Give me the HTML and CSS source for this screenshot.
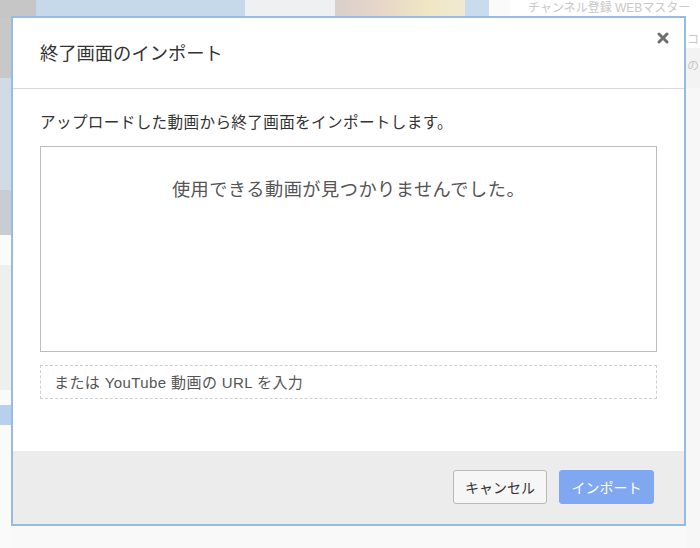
FILE: index.html
```html
<!DOCTYPE html>
<html lang="ja">
<head>
<meta charset="utf-8">
<title>終了画面のインポート</title>
<link rel="stylesheet" href="styles.css">
</head>
<body>
<div class="page">
  <div class="bg">
    <div class="bg-top">
      <div class="t t1"></div>
      <div class="t t2"></div>
      <div class="t t3"></div>
      <div class="t t4"></div>
      <div class="t t5"></div>
      <div class="t t6"></div>
      <div class="t t7"><span class="bg-text">チャンネル登録 WEBマスター</span></div>
    </div>
    <div class="bg-main">
      <div class="bg-left">
        <div class="s s1"></div>
        <div class="s s2"></div>
        <div class="s s3"></div>
        <div class="s s4"></div>
        <div class="s s5"></div>
        <div class="s s6"></div>
        <div class="s s7"></div>
        <div class="s s8"></div>
      </div>
      <div class="bg-center"></div>
      <div class="bg-right">
        <div class="r r1"><span class="bg-text">コ</span></div>
        <div class="r r2"><span class="bg-text">の</span></div>
        <div class="r r3"></div>
      </div>
    </div>
  </div>

  <div class="modal">
    <div class="modal-header">
      <h1 class="modal-title">終了画面のインポート</h1>
      <button class="close" aria-label="閉じる">
        <svg width="12" height="12" viewBox="0 0 12 12"><path d="M2 2 L10 10 M10 2 L2 10" stroke="#6e6e6e" stroke-width="3" stroke-linecap="round"/></svg>
      </button>
    </div>
    <div class="modal-body">
      <p class="intro">アップロードした動画から終了画面をインポートします。</p>
      <div class="video-list">
        <p class="empty">使用できる動画が見つかりませんでした。</p>
      </div>
      <input class="url-input" type="text" placeholder="または YouTube 動画の URL を入力">
    </div>
    <div class="modal-footer">
      <button class="btn btn-cancel">キャンセル</button>
      <button class="btn btn-primary">インポート</button>
    </div>
  </div>
</div>
</body>
</html>
```

FILE: styles.css
```css
* { box-sizing: border-box; }
html, body { margin: 0; padding: 0; }
body {
  font-family: "Liberation Sans", "Noto Sans CJK JP", sans-serif;
  background: #f9f9f9;
  width: 700px;
  height: 548px;
  overflow: hidden;
}
.page { position: relative; width: 700px; height: 548px; }

/* blurred background page */
.bg { display: flex; flex-direction: column; width: 700px; height: 548px; }
.bg-top { display: flex; height: 18px; flex: none; }
.t { height: 100%; }
.t1 { width: 36px; background: #c6c6c6; }
.t2 { width: 209px; background: #c5d9ea; }
.t3 { width: 90px; background: #eef0f2; }
.t4 { width: 130px; background: linear-gradient(90deg, #d9cfcb 0%, #e8d8c8 40%, #efe6c4 70%, #f0ead2 100%); }
.t5 { width: 24px; background: #c9dcee; }
.t6 { width: 21px; background: #fafafa; }
.t7 { flex: 1; background: #ffffff; padding-left: 18px; }
.bg-text { font-size: 12px; color: #c8c8c8; line-height: 12px; white-space: nowrap; }
.t7 .bg-text { position: relative; top: -2px; }
.bg-main { display: flex; flex: 1; }
.bg-left { width: 12px; display: flex; flex-direction: column; }
.s1 { height: 60px; background: #c8c8c8; }
.s2 { height: 112px; background: #d1dbe6; }
.s3 { height: 45px; background: #c7cdd3; }
.s4 { height: 30px; background: #fbfbfb; }
.s5 { height: 125px; background: #efefef; }
.s6 { height: 15px; background: #fafafa; }
.s7 { height: 20px; background: #b7d0ee; }
.s8 { flex: 1; background: #fafafa; }
.bg-center { flex: 1; }
.bg-right { width: 14px; display: flex; flex-direction: column; }
.r1 { height: 30px; background: #ffffff; padding-top: 16px; overflow: hidden; }
.r2 { height: 40px; background: #f3f3f3; padding-top: 12px; overflow: hidden; }
.r3 { flex: 1; background: #f7f7f7; }
.bg-right .bg-text { display: block; margin-left: 1px; }

/* modal dialog */
.modal {
  position: absolute;
  left: 11px;
  top: 16px;
  width: 675px;
  height: 510px;
  border: 2px solid #98bbe2;
  background: #ffffff;
  display: flex;
  flex-direction: column;
}
.modal-header {
  height: 71px;
  flex: none;
  border-bottom: 1px solid #dadada;
  display: flex;
  align-items: center;
  justify-content: space-between;
  padding: 0 15px 0 27px;
}
.modal-title {
  margin: 0;
  font-size: 18.3px;
  font-weight: 400;
  color: #333333;
  line-height: 24px;
  margin-top: 1px;
}
.close {
  align-self: flex-start;
  margin-top: 14px;
  width: 12px;
  height: 12px;
  padding: 0;
  border: 0;
  background: none;
  display: flex;
}
.modal-body {
  flex: 1;
  padding: 23px 27px 0 27px;
  display: flex;
  flex-direction: column;
}
.intro {
  margin: 0 0 12px 0;
  font-size: 15.6px;
  line-height: 22px;
  color: #333333;
  letter-spacing: 0.35px;
}
.video-list {
  height: 206px;
  border: 1px solid #bdbdbd;
  padding-top: 31px;
  text-align: center;
}
.empty {
  margin: 0;
  font-size: 18.2px;
  line-height: 24px;
  color: #555555;
  letter-spacing: 0.5px;
}
.url-input {
  margin-top: 13px;
  height: 34px;
  width: 100%;
  border: 1px dashed #cfcfcf;
  padding: 0 13px;
  font-family: inherit;
  font-size: 15px;
  color: #333333;
  letter-spacing: 0.4px;
  outline: none;
}
.url-input::placeholder { color: #555555; }
.modal-footer {
  height: 73px;
  flex: none;
  background: #ececec;
  display: flex;
  align-items: center;
  justify-content: flex-end;
  gap: 12px;
  padding: 0 30px 1px 0;
}
.btn {
  height: 34px;
  font-family: inherit;
  font-size: 14px;
  padding: 0;
  border-radius: 3px;
}
.btn-cancel {
  width: 94px;
  background: #f6f6f6;
  border: 1px solid #b9b9b9;
  color: #333333;
}
.btn-primary {
  width: 95px;
  background: #80a8f0;
  border: 1px solid #80a8f0;
  color: #ffffff;
}
```
